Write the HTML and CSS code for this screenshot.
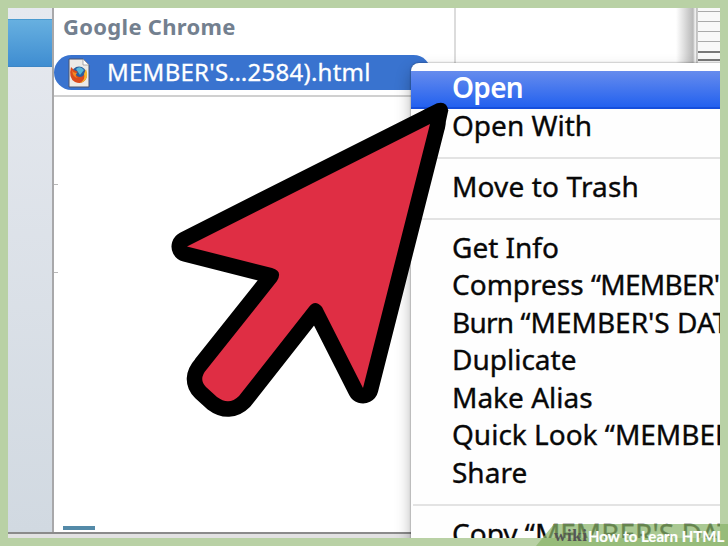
FILE: index.html
```html
<!DOCTYPE html>
<html lang="en">
<head>
<meta charset="utf-8">
<title>How to Learn HTML</title>
<link rel="stylesheet" href="styles.css">
</head>
<body>
<main class="window">
  <div class="panes">
    <aside class="sidebar"><div class="sidebar-active"></div></aside>
    <section class="files">
      <h2 class="group">Google Chrome</h2>
      <div class="file">
        <svg class="file-icon" width="22" height="30" viewBox="0 0 22 30">
          <path d="M1 1H15L21 7V29H1Z" fill="#eceae6" stroke="#4a5570"/>
          <path d="M15 1V7H21Z" fill="#fff" stroke="#8c8c90" stroke-width=".7"/>
          <circle cx="11" cy="16" r="7.500" fill="#2b5f9e"/>
          <path d="M8 11Q12 7 16 12L12 17Z" fill="#56b7d8"/>
          <path d="M3 9Q0 20 7 24Q14 27 18 21Q20 16 17 12Q17 19 12 19Q7 18 8 15L10 14Q6 13 3 9Z" fill="#dc4a1c"/>
          <path d="M18 11Q22 22 12 25Q18 21 16 16Z" fill="#f6b62c"/>
          <path d="M4 12Q5 15 9 15Q6 18 10 20Q5 20 4 12Z" fill="#f38a24"/>
        </svg>
        <span class="file-name">MEMBER'S…2584).html</span>
      </div>
      <div class="list"><i class="tick"></i><i class="tick"></i><i class="handle"></i></div>
    </section>
    <section class="preview">
      <div class="doc"><i></i><i></i><i></i><i></i><b></b><b></b></div>
    </section>
  </div>
  <div class="window-edge"></div>
  <nav class="menu">
    <div class="item selected">Open</div>
    <div class="item">Open With</div>
    <hr>
    <div class="item wide">Move to Trash</div>
    <hr>
    <div class="item">Get Info</div>
    <div class="item">Compress <span class="caps">“MEMBER'S DATA</span></div>
    <div class="item"><span class="tight">Burn</span> “MEMBER'S DATA</div>
    <div class="item">Duplicate</div>
    <div class="item">Make Alias</div>
    <div class="item">Quick Look “MEMBER'S DATA</div>
    <div class="item">Share</div>
    <hr>
    <div class="item">Copy “MEMBER'S DATA</div>
  </nav>
</main>
<svg class="pointer" width="728" height="546" viewBox="0 0 728 546">
  <path class="tip" d="M430 124L423 110.300L437 103.200Q447 100.500 448.300 110.500L444 130Z"/>
  <path class="arrow" d="M430 124L187 246.500L272 268Q283 271 277 281L207 369Q198 379 206 387L217 397Q229 406 239 396L309 307Q315 299 322 307L363 388Z"/>
</svg>
<div class="caption"><span class="wiki">wiki</span><span class="how">How to Learn HTML</span></div>
</body>
</html>
```

FILE: styles.css
```css
* { box-sizing: border-box; }
body {
  margin: 0;
  width: 728px;
  height: 546px;
  padding: 8px;
  background: #b9d1a5;
  overflow: hidden;
  position: relative;
  font-family: "Noto Sans", sans-serif;
}
.window {
  position: relative;
  width: 712px;
  height: 530px;
  overflow: hidden;
  background: #fff;
}
.panes { display: flex; height: 524px; }
.sidebar {
  width: 46px;
  padding-top: 11px;
  border-right: 2px solid #a8a8aa;
  background: linear-gradient(#e6e9ef, #d1d9e1);
}
.sidebar-active {
  height: 48px;
  border-top: 1px solid #4b9bd0;
  border-bottom: 1px solid #3d86c5;
  background: linear-gradient(#67b0e0, #3f8dd1);
}
.files {
  width: 402px;
  display: flex;
  flex-direction: column;
  border-right: 2px solid #dcdcdc;
}
.group {
  height: 47px;
  margin: 0;
  padding-left: 9px;
  font-size: 22px;
  line-height: 37px;
  letter-spacing: .3px;
  color: #73808f;
}
.file {
  display: flex;
  align-items: center;
  height: 35px;
  width: 377px;
  padding-left: 14px;
  border-radius: 18px;
  background: #3973cf;
  color: #fff;
}
.file-icon { margin-right: 17px; }
.file-name {
  font-size: 24px;
  line-height: 34px;
  letter-spacing: .25px;
  padding-bottom: 2px;
  white-space: nowrap;
  -webkit-text-stroke: .3px #fff;
}
.list {
  flex: 1;
  margin-top: 5px;
  border-top: 2px solid #d0d0d0;
  display: flex;
  flex-direction: column;
}
.tick { width: 4px; height: 1px; margin-top: 87px; background: #b8b8b8; }
.handle { width: 32px; height: 4px; margin: auto 0 2px 9px; background: #548aa8; }
.preview { flex: 1; display: flex; justify-content: flex-end; }
.doc {
  width: 44px;
  padding: 3px 0 0 22px;
  background: linear-gradient(90deg, #fff, #b8b8b8 17px, #eee 19px, #eee 20px, #999 21px, #f8f8f8 22px);
}
.doc i { display: block; height: 1px; margin-bottom: 9px; background: #aaa; }
.doc b { display: block; height: 2px; margin-bottom: 6px; background: #777; }
.window-edge { height: 6px; border-top: 2px solid #8b8b8b; background: #e2e2e2; }
.menu {
  position: absolute;
  left: 403px;
  top: 55px;
  width: 420px;
  height: 490px;
  padding-top: 8px;
  border-radius: 8px 0 0 0;
  background: #fefefe;
  box-shadow: 0 8px 16px rgba(0, 0, 0, .3), 0 0 2px rgba(0, 0, 0, .5);
}
.item {
  height: 37.500px;
  padding-left: 41px;
  font-size: 28px;
  line-height: 32px;
  white-space: nowrap;
  color: #080808;
  -webkit-text-stroke: .35px currentColor;
}
.wide { letter-spacing: .15px; }
.caps { letter-spacing: -.7px; }
.tight { letter-spacing: -.8px; }
.selected {
  font-weight: 600;
  letter-spacing: -.7px;
  -webkit-text-stroke: 0;
  color: #fff;
  border-bottom: 2px solid #164fdc;
  background: linear-gradient(#668ced, #2361ef);
}
.menu hr {
  height: 2px;
  margin: 11px 0 10.500px 2px;
  border: 0;
  background: #e3e3e3;
}
.pointer { position: absolute; left: 0; top: 0; }
.arrow {
  fill: #df2e44;
  stroke: #000;
  stroke-width: 31px;
  stroke-linejoin: round;
  paint-order: stroke;
}
.caption {
  position: absolute;
  right: 0;
  bottom: 0;
  width: 192px;
  height: 22px;
  padding-left: 18px;
  display: flex;
  clip-path: polygon(18px 0, 100% 0, 100% 100%, 0 100%);
  background: rgba(137, 180, 105, .72);
  font-size: 15px;
  line-height: 24px;
  white-space: nowrap;
}
.wiki {
  width: 34px;
  font-family: "Liberation Serif", serif;
  font-size: 17px;
  font-weight: 700;
  letter-spacing: .6px;
  color: #555;
}
.how { font-family: Lato, sans-serif; font-weight: 700; color: #fff; -webkit-text-stroke: .2px #fff; }
```
